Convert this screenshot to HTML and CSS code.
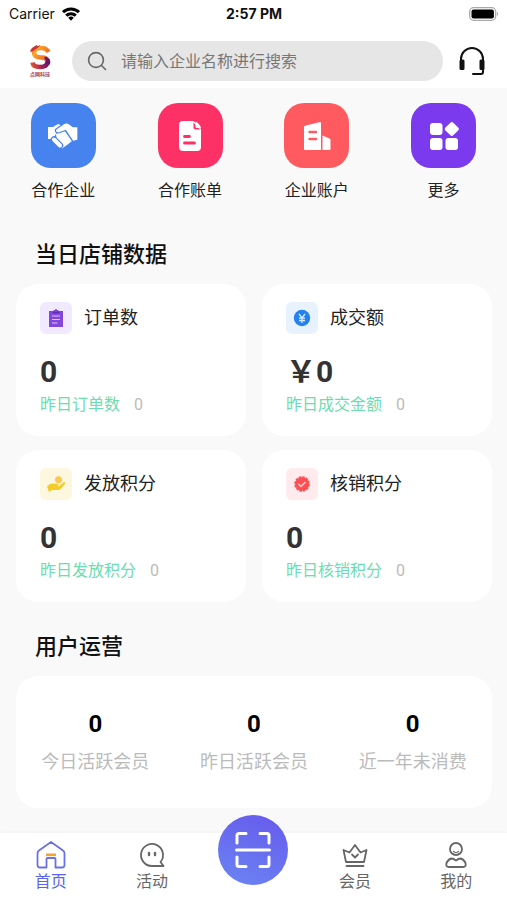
FILE: index.html
```
<!DOCTYPE html>
<html lang="zh-CN">
<head>
<meta charset="UTF-8">
<meta name="viewport" content="width=device-width, initial-scale=1.0">
<title>首页</title>
<link rel="stylesheet" href="styles.css">
</head>
<body>

<div class="status-bar">
    <div class="carrier">
        <span>Carrier</span>
        <svg width="20" height="16" viewBox="0 0 20 16" fill="none" stroke="#000" stroke-width="3">
            <path d="M2 6.2a11.6 11.6 0 0 1 16 0M5.2 9.6a7 7 0 0 1 9.6 0"/>
            <path d="M7.2 11.8a4 4 0 0 1 5.6 0L10 14.8z" fill="#000" stroke="none"/>
        </svg>
    </div>
    <div class="time">2:57 PM</div>
    <div class="battery">
        <svg width="30" height="14" viewBox="0 0 30 14">
            <rect x="0.7" y="0.7" width="26" height="12.6" rx="4" fill="#fff" stroke="#aaa" stroke-width="1.3"/>
            <rect x="2.5" y="2.5" width="22.4" height="9" rx="2" fill="#000"/>
            <path d="M28 5q2 2 0 4z" fill="#999"/>
        </svg>
    </div>
</div>

<header class="header">
    <svg class="logo" width="26" height="34" viewBox="0 0 26 34">
        <defs>
            <linearGradient id="logoTop" gradientUnits="userSpaceOnUse" x1="4" y1="2" x2="20" y2="14">
                <stop offset="0" stop-color="#d8502f"/>
                <stop offset="0.35" stop-color="#f9a825"/>
                <stop offset="1" stop-color="#f0602a"/>
            </linearGradient>
            <linearGradient id="logoBottom" gradientUnits="userSpaceOnUse" x1="4" y1="22" x2="22" y2="14">
                <stop offset="0" stop-color="#ea5a2a"/>
                <stop offset="0.5" stop-color="#a3205c"/>
                <stop offset="1" stop-color="#55126e"/>
            </linearGradient>
        </defs>
        <path d="M20 15Q22 23 13 23 6 23 5.500 18.500" fill="none" stroke="url(#logoBottom)" stroke-width="4.500"/>
        <path d="M21.500 8Q19 3.500 13.500 4 7 4.500 7 9 7.500 13.500 14 13.500 19 13 20.500 17" fill="none" stroke="url(#logoTop)" stroke-width="4.500"/>
        <path d="M19 12.500Q24.500 15 23 20.500L19 20.500Q20 16 17 14z" fill="#6b1668"/>
        <path d="M3 7l2-3 3-2 1.500-1 1 1 3-1-3 3L6 7 4 8z" fill="#c93436"/>
        <text x="13" y="32" text-anchor="middle" class="logo-text">点网科技</text>
    </svg>
    <label class="search">
        <svg width="20" height="20" viewBox="0 0 20 20" fill="none" stroke="#666" stroke-width="1.6" stroke-linecap="round">
            <circle cx="9" cy="9" r="7.4"/>
            <path d="M14.5 14.5l4 4"/>
        </svg>
        <input type="text" placeholder="请输入企业名称进行搜索" aria-label="搜索企业">
    </label>
    <button class="service" type="button" aria-label="客服">
        <svg width="28" height="30" viewBox="0 0 28 30" fill="none" stroke="#111" stroke-width="2">
            <path d="M3 15v-2a11 11 0 0 1 22 0v13q0 2-2 2H15" stroke-linecap="round" stroke-linejoin="round"/>
            <rect x="1.5" y="13.5" width="5" height="10.5" rx="1.5" fill="#111" stroke="none"/>
            <rect x="21.5" y="13.5" width="5" height="10.5" rx="1.5" fill="#111" stroke="none"/>
        </svg>
    </button>
</header>

<main class="content">
    <nav class="shortcuts">
        <a href="#" class="shortcut">
            <span class="tile blue">
                <svg width="32" height="28" viewBox="0 0 32 28" fill="#fff">
                    <path d="M1 5h5l5-3 5 2-6 6-4 7H1z"/>
                    <path d="M9 12l8-4 8 11-5 4-5 3.500-5-6z"/>
                    <path d="M7 17.500l6 6" stroke="#4783ef" stroke-width="6.500" stroke-linecap="round"/>
                    <path d="M7 17.500l6 6" stroke="#fff" stroke-width="4" stroke-linecap="round"/>
                    <path d="M8.500 7.500L17 1.500Q20 0 22.500 2L26 4.500h5V18l-5 1.500L18.500 8.500 13 10.500Q8 12 8.500 7.500z" stroke="#4783ef" stroke-width="1.300"/>
                </svg>
            </span>
            <span>合作企业</span>
        </a>
        <a href="#" class="shortcut">
            <span class="tile pink">
                <svg width="24" height="32" viewBox="0 0 24 32">
                    <path d="M5 1h10.500L23 9v18q0 4-4 4H5q-4 0-4-4V5q0-4 4-4z" fill="#fff"/>
                    <path d="M15.500 2.500v5q0 2 2 2H22z" fill="#fe3167"/>
                    <path d="M17.500 1.500q4.500 2.500 5.500 6.500h-4q-1.500 0-1.500-1.500z" fill="#fff"/>
                    <path d="M6.500 16.500h5M6.500 23h10" stroke="#fe3167" stroke-width="2.800" stroke-linecap="round"/>
                </svg>
            </span>
            <span>合作账单</span>
        </a>
        <a href="#" class="shortcut">
            <span class="tile red">
                <svg width="30" height="30" viewBox="0 0 30 30">
                    <path d="M2 6q0-1 1-1.300L18 1q1 0 1 1v27H3q-1 0-1-1z" fill="#fff"/>
                    <path d="M20.500 14.500l7 3q1 .5 1 1.500v9q0 1-1 1h-7z" fill="#fff"/>
                    <path d="M7.500 11h6.500M7.500 18h6.500" stroke="#ff5a5f" stroke-width="2.400" stroke-linecap="round"/>
                </svg>
            </span>
            <span>企业账户</span>
        </a>
        <a href="#" class="shortcut">
            <span class="tile purple">
                <svg width="30" height="30" viewBox="0 0 30 30" fill="#fff">
                    <rect x="1" y="2" width="12.500" height="12" rx="3"/>
                    <rect x="1" y="17" width="12.500" height="12" rx="3"/>
                    <rect x="16.500" y="17" width="12.500" height="12" rx="3"/>
                    <rect x="17.300" y="2.500" width="11" height="11" rx="2" transform="rotate(45 22.800 8)"/>
                </svg>
            </span>
            <span>更多</span>
        </a>
    </nav>

    <h2>当日店铺数据</h2>
    <section class="cards">
        <div class="card">
            <div class="card-head">
                <span class="badge badge-purple">
                    <svg width="16" height="20" viewBox="0 0 16 20">
                        <path d="M1 3h4l1-1h1L8 .5 9 2h1l1 1h4v16H1z" fill="#8347d9"/>
                        <path d="M4.500 4.500h7" stroke="#5c2bb4" stroke-width="1.500"/>
                        <path d="M4 8h8M4 11.500h8M4 15h5.500" stroke="#d9c4fa" stroke-width="1.100"/>
                    </svg>
                </span>
                <h3>订单数</h3>
            </div>
            <div class="amount">0</div>
            <div class="yesterday">昨日订单数<span>0</span></div>
        </div>
        <div class="card">
            <div class="card-head">
                <span class="badge badge-blue">
                    <svg width="18" height="18" viewBox="0 0 18 18" fill="none">
                        <circle cx="9" cy="9" r="8.200" fill="#2482ee"/>
                        <path d="M6 5l3 4 3-4M9 9v5M6 9.200h6M6 11.500h6" stroke="#d5ebff" stroke-width="1.300"/>
                    </svg>
                </span>
                <h3>成交额</h3>
            </div>
            <div class="amount">￥0</div>
            <div class="yesterday">昨日成交金额<span>0</span></div>
        </div>
        <div class="card">
            <div class="card-head">
                <span class="badge badge-yellow">
                    <svg width="20" height="18" viewBox="0 0 20 18">
                        <circle cx="12.500" cy="4.800" r="3.500" fill="#fbc94b"/>
                        <path d="M1 11.500Q4 8 7 8.500l5 .5q1.500 1 0 2H8.500l4.500.3 4.500-4Q19.500 6.500 19 9l-4 4.500Q14 15 11 15H6l-3 2z" fill="#f5cc25"/>
                    </svg>
                </span>
                <h3>发放积分</h3>
            </div>
            <div class="amount">0</div>
            <div class="yesterday">昨日发放积分<span>0</span></div>
        </div>
        <div class="card">
            <div class="card-head">
                <span class="badge badge-red">
                    <svg width="18" height="18" viewBox="0 0 18 18" fill="none">
                        <circle cx="9" cy="9" r="6.800" fill="#fd5055"/>
                        <circle cx="9" cy="9" r="6.800" stroke="#fd5055" stroke-width="2" stroke-dasharray="2.600 .96"/>
                        <path d="M5.500 9l2.500 2.500 4.500-4.500" stroke="#ffd0d0" stroke-width="1.500"/>
                    </svg>
                </span>
                <h3>核销积分</h3>
            </div>
            <div class="amount">0</div>
            <div class="yesterday">昨日核销积分<span>0</span></div>
        </div>
    </section>

    <h2>用户运营</h2>
    <section class="stats">
        <div class="stat"><strong>0</strong><span>今日活跃会员</span></div>
        <div class="stat"><strong>0</strong><span>昨日活跃会员</span></div>
        <div class="stat"><strong>0</strong><span>近一年未消费</span></div>
    </section>
</main>

<nav class="tabbar">
    <a href="#" class="tab active">
        <svg width="30" height="30" viewBox="0 0 30 30" fill="none">
            <path d="M15 2L27 10.500q1.500 1 1.500 3V25q0 2.500-2.500 2.500h-6.500V19q0-1-1-1h-7q-1 0-1 1v8.500H4Q1.500 27.500 1.500 25V13.500q0-2 1.500-3z" stroke="#6c70e8" stroke-width="1.800" stroke-linejoin="round"/>
            <path d="M10 14.800h10" stroke="#f2a33a" stroke-width="2.600"/>
        </svg>
        <span>首页</span>
    </a>
    <a href="#" class="tab">
        <svg width="30" height="30" viewBox="0 0 30 30" fill="none" stroke="#666" stroke-width="1.800" stroke-linecap="round" stroke-linejoin="round">
            <path d="M26.500 26H15A11 11 0 1 1 23.500 22z"/>
            <path d="M12 13v2M18 13v2" stroke-width="2.400"/>
        </svg>
        <span>活动</span>
    </a>
    <div class="tab">
        <button class="scan" type="button" aria-label="扫一扫">
            <svg width="38" height="38" viewBox="0 0 38 38" fill="none" stroke="#fff" stroke-width="3" stroke-linecap="round" stroke-linejoin="round">
                <path d="M12 2.500H5q-2 0-2 2V12M26 2.500h7q2 0 2 2V12M3 26v7.500q0 2 2 2h7M35 26v7.500q0 2-2 2h-7M2.500 19h33"/>
            </svg>
        </button>
    </div>
    <a href="#" class="tab">
        <svg width="30" height="30" viewBox="0 0 30 30" fill="none" stroke="#666" stroke-width="1.800" stroke-linecap="round" stroke-linejoin="round">
            <path d="M3.500 10l6 2.500L15 5l5.500 7.500 6-2.500L24 22H6zM6.500 26h17M12 14.500l3 3 3-3"/>
        </svg>
        <span>会员</span>
    </a>
    <a href="#" class="tab">
        <svg width="30" height="30" viewBox="0 0 30 30" fill="none" stroke="#666" stroke-width="1.800" stroke-linejoin="round" stroke-linecap="round">
            <circle cx="15" cy="9" r="6"/>
            <path d="M12.500 11.500q2.500 2 5 0" stroke-width="1.200"/>
            <path d="M15 20.500q2.500-2 4.500-2 3 .5 5 4.500 1 4-2.500 4H8q-3.500 0-2.500-4 2-4 5-4.500 2 0 4.500 2z"/>
        </svg>
        <span>我的</span>
    </a>
</nav>

</body>
</html>
```
FILE: styles.css
```
/* 通用 */
* {
    box-sizing: border-box;
}
body {
    display: flex;
    flex-direction: column;
    min-height: 100vh;
    margin: 0;
    background-color: #f9f9f9;
    color: #222;
    font-family: Inter, "Noto Sans CJK SC", sans-serif;
    font-size: 16px;
    line-height: 24px;
}
a {
    color: inherit;
    text-decoration: none;
}
button {
    padding: 0;
    border: none;
    background: none;
    cursor: pointer;
}
svg {
    display: block;
}
h2 {
    margin: 0;
    padding: 0 35px;
    color: #111;
    font-size: 22px;
    font-weight: 500;
    line-height: 32px;
}
h3 {
    margin: 0;
    font-size: 18px;
    font-weight: normal;
}

/* 状态栏 */
.status-bar {
    display: grid;
    grid-template-columns: 1fr auto 1fr;
    align-items: center;
    height: 28px;
    padding: 0 8px 0 9px;
    background-color: #fff;
    color: #111;
    font-size: 14px;
}
.carrier {
    display: flex;
    align-items: center;
    gap: 6px;
}
.time {
    font-weight: bold;
}
.battery {
    justify-self: end;
}

/* 顶部搜索 */
.header {
    display: flex;
    align-items: center;
    height: 60px;
    padding: 5px 21px 0 27px;
    background-color: #fff;
}
.logo-text {
    fill: #a8404c;
    font-size: 5px;
    font-weight: bold;
}
.search {
    display: flex;
    flex: 1;
    align-items: center;
    gap: 14px;
    height: 40px;
    margin: 0 15px 0 19px;
    padding: 0 15px;
    border-radius: 20px;
    background-color: #e6e6e6;
}
.search input {
    flex: 1;
    min-width: 0;
    padding: 0;
    border: none;
    outline: none;
    background: none;
    font: inherit;
}
.search input::placeholder {
    color: #777;
}

/* 快捷入口 */
.content {
    padding-top: 15px;
}
.shortcuts {
    display: grid;
    grid-template-columns: repeat(4, 1fr);
    margin-bottom: 36px;
}
.shortcut {
    display: flex;
    flex-direction: column;
    align-items: center;
    gap: 10px;
}
.tile {
    display: flex;
    align-items: center;
    justify-content: center;
    width: 65px;
    height: 65px;
    border-radius: 20px;
}
.blue {
    background-color: #4783ef;
}
.pink {
    background-color: #fe3167;
}
.red {
    background-color: #ff5a5f;
}
.purple {
    background-color: #7b3aed;
}

/* 数据卡片 */
.cards {
    display: grid;
    grid-template-columns: 1fr 1fr;
    gap: 14px 16px;
    padding: 14px 15px 28px 16px;
}
.card {
    padding: 18px 24px 19px;
    border-radius: 22px;
    background-color: #fff;
}
.card-head {
    display: flex;
    align-items: center;
    gap: 12px;
    margin-bottom: 18px;
}
.badge {
    display: flex;
    align-items: center;
    justify-content: center;
    width: 32px;
    height: 32px;
    border-radius: 6px;
}
.badge-purple {
    background-color: #f1e9fd;
}
.badge-blue {
    background-color: #e8f2ff;
}
.badge-yellow {
    background-color: #fef7df;
}
.badge-red {
    background-color: #ffebed;
}
.amount {
    color: #333;
    font-family: Roboto, "Noto Sans CJK SC", sans-serif;
    font-size: 30px;
    font-weight: bold;
    line-height: 40px;
}
.yesterday {
    color: #6ddcb0;
}
.yesterday span {
    margin-left: 14px;
    color: #bbb;
    font-family: Roboto, sans-serif;
}

/* 用户运营 */
.stats {
    display: grid;
    grid-template-columns: repeat(3, 1fr);
    margin: 14px 15px 25px 16px;
    padding: 30px 0 34px;
    border-radius: 22px;
    background-color: #fff;
}
.stat {
    display: flex;
    flex-direction: column;
    align-items: center;
    color: #bbb;
    font-size: 18px;
}
.stat strong {
    margin-bottom: 8px;
    color: #000;
    font-family: Roboto, sans-serif;
    font-size: 24px;
    line-height: 36px;
}

/* 底部导航 */
.tabbar {
    display: grid;
    grid-template-columns: repeat(5, 1fr);
    height: 67px;
    margin-top: auto;
    background-color: #fff;
    box-shadow: 0 -1px 3px rgba(0, 0, 0, 0.03);
}
.tab {
    display: flex;
    position: relative;
    flex-direction: column;
    align-items: center;
    padding-top: 7px;
    color: #666;
    line-height: 22px;
}
.tab.active {
    color: #5b62ee;
}
.scan {
    display: flex;
    position: absolute;
    top: -18px;
    align-items: center;
    justify-content: center;
    width: 70px;
    height: 70px;
    border-radius: 50%;
    background: linear-gradient(200deg, #6659ec, #6b85f4);
}
```
